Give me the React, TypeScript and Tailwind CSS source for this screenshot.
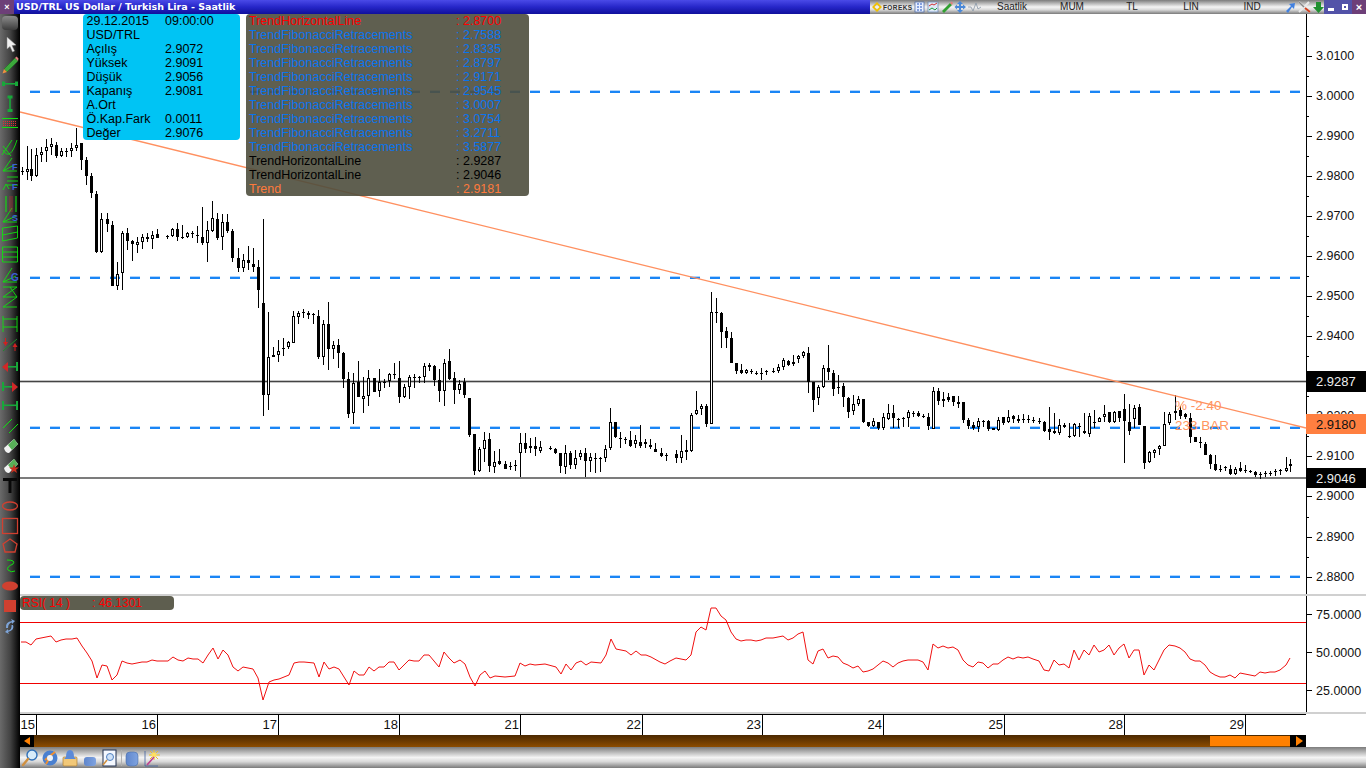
import React from "react";

const SANS = '"Liberation Sans", Arial, sans-serif';

// x, high, bodyTop, bodyBottom, low, hollow(1)/black(0)
const C: number[][] = [
[22,167,171,172,175,0],[27,146,169,172,180,1],[31,149,169,176,181,0],[36,148,155,176,177,1],[41,147,152,155,162,1],[46,139,147,151,162,1],[51,138,144,147,155,1],[56,142,145,156,158,0],[61,148,151,156,157,1],[66,148,151,152,157,0],[71,143,148,151,157,1],[76,128,145,148,151,1],[81,143,143,160,170,0],[86,157,160,176,185,0],[91,173,176,193,198,0],[96,191,194,252,253,0],[101,213,219,252,253,1],[107,213,219,224,232,0],[112,221,225,286,286,0],[117,262,274,286,290,1],[122,231,233,273,290,1],[127,228,233,241,250,0],[132,240,241,244,261,0],[137,237,242,245,253,1],[142,234,237,242,249,1],[147,233,237,239,242,0],[152,231,235,239,249,1],[157,229,234,238,238,0],[167,235,236,237,239,0],[172,228,229,236,237,1],[177,223,229,237,241,0],[182,225,237,238,239,0],[187,232,233,237,238,1],[192,231,233,234,238,0],[197,226,235,236,243,0],[202,207,237,243,245,0],[207,221,230,243,262,1],[212,201,218,231,232,1],[217,213,219,238,240,0],[222,214,222,237,250,1],[227,214,222,231,233,0],[232,229,231,258,262,0],[238,248,258,268,272,0],[243,254,260,268,272,1],[248,246,260,263,270,0],[253,248,264,267,272,0],[258,260,267,290,308,0],[263,219,303,395,416,0],[268,312,357,395,410,1],[273,347,355,357,357,0],[278,340,351,355,362,1],[283,338,348,349,356,0],[288,341,342,347,349,1],[293,311,316,343,343,1],[298,311,313,317,324,1],[303,309,312,313,318,0],[308,311,313,315,319,0],[313,313,314,315,324,0],[318,310,316,357,359,0],[323,320,324,357,365,1],[328,302,324,349,370,0],[333,341,345,349,359,1],[338,339,345,353,368,0],[343,352,353,379,388,0],[348,372,379,414,418,0],[353,373,383,413,424,1],[358,361,382,397,397,0],[363,377,396,399,413,1],[368,370,378,396,406,1],[374,378,378,392,392,0],[379,369,382,391,397,1],[384,379,382,383,388,0],[389,373,374,381,387,1],[394,363,374,375,379,0],[399,361,378,397,403,0],[404,384,387,397,398,1],[409,375,377,387,399,1],[414,374,377,378,388,0],[419,376,377,378,383,0],[424,363,366,377,383,1],[429,363,365,367,371,0],[434,365,366,380,386,0],[439,369,380,391,402,0],[444,359,363,391,406,1],[449,349,361,379,380,0],[454,372,378,390,404,0],[459,380,384,390,394,1],[464,378,382,395,398,0],[469,398,398,435,437,0],[474,434,434,471,475,0],[479,447,449,471,472,1],[484,432,440,449,462,1],[489,433,439,466,472,0],[494,451,462,467,473,1],[499,449,461,464,465,0],[505,461,464,469,469,0],[510,462,466,467,470,0],[515,460,465,466,471,0],[520,433,443,453,477,1],[525,433,443,449,453,0],[530,438,446,448,453,0],[535,437,446,449,456,0],[540,441,447,451,453,1],[550,446,448,449,450,0],[555,448,449,453,454,0],[560,453,453,466,473,0],[565,445,453,467,474,1],[570,451,453,465,469,0],[575,450,458,465,469,1],[580,450,453,457,460,1],[585,448,453,461,477,0],[590,453,457,461,472,1],[595,453,458,459,473,0],[600,457,458,459,472,0],[605,445,449,458,462,1],[610,408,422,448,450,1],[615,422,422,437,438,0],[620,432,438,439,448,0],[625,437,439,440,444,0],[630,431,440,446,447,0],[635,435,440,444,448,1],[640,425,442,446,448,0],[645,439,442,444,448,0],[650,439,445,447,449,0],[655,443,449,452,452,0],[661,448,453,456,457,0],[666,453,455,456,461,0],[676,450,454,458,463,0],[681,435,451,458,463,1],[686,440,450,452,460,0],[691,413,415,451,452,1],[696,391,410,414,415,1],[701,404,406,409,415,1],[706,404,406,424,427,0],[711,292,312,424,424,1],[716,298,312,313,323,0],[721,312,313,332,348,0],[726,327,331,338,348,0],[731,332,338,363,363,0],[736,363,363,371,374,0],[741,364,370,373,374,0],[746,369,370,373,374,1],[751,369,371,372,374,0],[756,371,373,374,375,0],[761,368,373,374,380,0],[766,370,371,372,375,0],[773,368,371,372,373,0],[778,364,367,371,373,1],[783,358,360,367,370,1],[788,360,361,365,366,0],[793,355,362,364,366,0],[798,355,356,359,363,1],[803,351,352,356,358,1],[808,347,353,382,393,0],[813,382,382,400,412,0],[818,385,387,398,405,1],[823,365,368,387,388,1],[828,345,368,372,380,0],[833,370,373,389,396,0],[838,375,387,388,394,0],[843,383,386,397,407,0],[848,397,398,412,418,0],[853,395,404,411,415,1],[858,396,399,404,406,1],[863,399,399,422,423,0],[868,422,422,426,427,0],[873,418,421,426,427,1],[878,422,422,428,430,0],[883,413,417,428,430,1],[888,404,413,419,420,1],[893,405,413,418,428,0],[898,418,419,420,428,0],[903,417,418,419,427,0],[908,410,412,418,427,1],[913,411,413,414,417,0],[918,411,413,416,417,0],[923,414,416,417,418,0],[928,413,417,426,430,0],[933,387,391,429,429,1],[938,388,391,401,405,0],[943,392,399,401,407,0],[948,393,397,400,402,0],[953,396,396,402,406,0],[958,396,402,404,408,1],[963,402,402,420,423,0],[968,418,420,426,429,0],[973,422,425,428,430,0],[978,418,421,427,432,1],[983,420,421,422,427,0],[988,420,421,429,431,0],[993,428,428,430,430,0],[998,417,420,430,431,1],[1003,417,417,423,425,0],[1008,410,417,422,423,1],[1013,415,416,419,423,0],[1018,415,419,421,423,0],[1023,414,419,420,423,0],[1028,415,419,420,423,0],[1033,417,420,421,423,0],[1039,418,421,422,424,0],[1044,421,422,431,432,0],[1049,407,429,432,440,0],[1054,413,431,433,434,0],[1059,419,425,433,435,1],[1064,423,425,427,428,0],[1069,423,436,437,438,0],[1074,423,424,436,437,1],[1079,423,426,427,437,0],[1084,413,431,433,434,0],[1089,413,416,434,437,1],[1094,410,422,423,428,0],[1099,417,418,422,422,1],[1104,405,414,417,422,1],[1109,412,412,422,423,0],[1114,411,412,422,423,1],[1119,411,411,418,422,0],[1124,394,409,421,463,0],[1129,404,422,431,435,0],[1134,405,408,419,428,1],[1139,404,407,425,425,0],[1144,426,426,463,469,0],[1149,451,452,462,463,1],[1154,449,450,453,458,1],[1159,445,446,449,455,1],[1164,412,424,446,446,1],[1169,412,414,423,425,1],[1175,395,411,413,420,1],[1180,406,410,416,419,0],[1185,413,414,417,419,0],[1190,413,418,437,443,0],[1195,437,437,442,442,0],[1200,437,442,443,448,0],[1205,442,444,455,455,0],[1210,454,455,464,469,0],[1215,455,464,470,471,0],[1220,465,469,470,472,0],[1225,466,467,468,471,0],[1230,465,469,474,475,0],[1235,467,469,474,475,1],[1240,462,468,471,472,0],[1245,465,470,471,473,0],[1250,470,471,472,473,0],[1255,471,472,475,477,0],[1260,472,474,475,479,0],[1265,471,473,474,477,0],[1270,471,473,474,476,0],[1275,469,471,472,476,0],[1280,469,470,471,475,0],[1286,457,468,471,472,1],[1290,459,464,466,472,1],
];

const RSI = "21,642 26,642 31,645 36,639 41,638 46,637 51,636 56,642 61,640 66,639 72,639 77,638 82,646 87,653 92,661 97,678 102,665 107,666 112,680 117,675 122,661 127,663 132,664 137,663 142,662 147,662 152,660 157,661 168,661 173,657 178,660 183,661 188,658 193,659 198,659 203,663 208,655 213,648 218,659 223,650 228,655 233,667 238,671 243,667 248,668 253,669 258,678 263,700 269,682 274,680 279,679 289,675 294,663 299,662 304,662 314,663 319,677 324,662 329,669 334,667 339,669 349,685 354,671 359,675 364,675 369,667 374,671 379,667 384,667 389,662 394,662 399,670 409,660 414,661 419,661 424,655 429,655 434,661 439,667 444,652 449,658 454,663 460,660 465,664 470,677 475,686 480,675 485,671 490,678 495,676 505,677 515,676 520,663 525,666 530,664 535,665 545,664 556,667 561,674 566,664 571,670 576,663 581,661 586,665 591,662 601,663 606,655 611,639 616,649 626,651 631,655 636,651 641,655 646,655 651,657 660,662 665,664 670,661 676,658 681,659 686,660 691,655 696,632 701,627 706,630 711,608 716,608 721,616 726,620 731,632 736,639 741,641 746,640 751,640 756,641 761,640 766,638 773,638 778,637 783,636 788,640 793,638 798,634 803,632 808,660 813,664 818,651 823,649 828,658 833,656 838,657 843,663 848,665 853,668 858,666 863,672 868,671 873,669 878,665 883,661 888,663 893,667 898,663 903,661 908,660 913,660 918,660 923,662 928,670 933,644 938,648 943,646 948,648 953,647 958,650 963,660 968,665 973,667 978,662 983,663 988,668 993,664 998,664 1003,660 1008,657 1013,659 1018,657 1023,658 1028,657 1033,659 1039,661 1044,670 1049,671 1054,660 1059,665 1064,664 1069,668 1074,650 1079,660 1084,650 1089,655 1094,645 1099,652 1104,650 1109,645 1114,655 1119,648 1124,644 1129,658 1134,650 1139,650 1144,675 1149,665 1154,670 1159,660 1164,650 1169,645 1175,646 1180,648 1185,652 1190,659 1195,661 1200,661 1205,665 1210,672 1215,675 1220,677 1225,677 1230,675 1235,678 1240,673 1245,674 1250,675 1255,676 1260,672 1265,673 1270,672 1275,672 1280,670 1286,665 1290,658";

const PRICES: [string, number][] = [["3.0100",56],["3.0000",96],["2.9900",136],["2.9800",176],["2.9700",216],["2.9600",256],["2.9500",296],["2.9400",336],["2.9200",416],["2.9100",456],["2.9000",496],["2.8900",537],["2.8800",577]];
const MINOR = [36,76,116,156,196,236,276,316,356,376,396,436,476,517,557];

const INFO = [["29.12.2015","09:00:00"],["USD/TRL",""],["Açılış","2.9072"],["Yüksek","2.9091"],["Düşük","2.9056"],["Kapanış","2.9081"],["A.Ort",""],["Ö.Kap.Fark","0.0011"],["Değer","2.9076"]];

const R = "text-[#ff0000]", B = "text-[#0a74ee]", K = "text-black", O = "text-[#ff7a3c]";
const TRENDS: [string, string, string][] = [["TrendHorizontalLine","2.8700",R],["TrendFibonacciRetracements","2.7588",B],["TrendFibonacciRetracements","2.8335",B],["TrendFibonacciRetracements","2.8797",B],["TrendFibonacciRetracements","2.9171",B],["TrendFibonacciRetracements","2.9545",B],["TrendFibonacciRetracements","3.0007",B],["TrendFibonacciRetracements","3.0754",B],["TrendFibonacciRetracements","3.2711",B],["TrendFibonacciRetracements","3.5877",B],["TrendHorizontalLine","2.9287",K],["TrendHorizontalLine","2.9046",K],["Trend","2.9181",O]];

const CHROME = "bg-[linear-gradient(to_bottom,#7c7c7c_0%,#a8a8a8_18%,#f4f4f4_50%,#d8d8d8_70%,#7a7a7a_100%)]";

function Candle({ d }: { d: number[] }) {
  const [x, h, t, b, l, hollow] = d;
  const flat = b - t <= 1;
  return (
    <g>
      <rect x={x} y={h} width={1} height={l - h} fill="#000" />
      <rect x={x - 1} y={t} width={3} height={Math.max(b - t, 1)} fill="#000" />
      {hollow === 1 && !flat && <rect x={x} y={t + 1} width={1} height={b - t - 2} fill="#fff" />}
    </g>
  );
}

function MainChart() {
  return (
    <svg viewBox="20 14 1346 580" className="block w-[1346px] h-[580px]">
      <g shapeRendering="crispEdges">
        {[92, 278, 428, 577].map((y) => (
          <g key={y}>
            <line x1={30} x2={1306} y1={y - 0.5} y2={y - 0.5} stroke="#1a85f5" strokeOpacity={0.35} strokeWidth={3} strokeDasharray="10 10" />
            <line x1={30} x2={1306} y1={y} y2={y} stroke="#1a85f5" strokeWidth={2} strokeDasharray="10 10" />
          </g>
        ))}
        <rect x={20} y={380} width={1286} height={3} fill="#c4c4c4" />
        <rect x={20} y={381} width={1286} height={1} fill="#444" />
        <rect x={20} y={477} width={1286} height={2} fill="#7c7c7c" />
        {C.map((d, i) => <Candle key={i} d={d} />)}
      </g>
      <line x1={20} y1={112} x2={1306} y2={428} stroke="#ff9060" strokeWidth={1.3} />
      <text x={1175} y={410} fontFamily={SANS} fontSize={13.5} fill="#ff9560">% -2.40</text>
      <text x={1175} y={430} fontFamily={SANS} fontSize={13.5} fill="#ff9560">233 BAR</text>
      <g shapeRendering="crispEdges">
        <rect x={1306} y={14} width={1} height={580} fill="#000" />
        {PRICES.map(([, y]) => <rect key={y} x={1306} y={y} width={6} height={1} fill="#000" />)}
        {MINOR.map((y) => <rect key={y} x={1306} y={y} width={3} height={1} fill="#000" />)}
      </g>
      {PRICES.map(([p, y]) => (
        <text key={p} x={1316} y={y + 4} fontFamily={SANS} fontSize={12.5} fill="#111">{p}</text>
      ))}
      <rect x={1306} y={371} width={60} height={21} fill="#000" />
      <text x={1316} y={386} fontFamily={SANS} fontSize={13} fill="#eee">2.9287</text>
      <rect x={1306} y={414} width={60} height={20} fill="#ff7f40" />
      <text x={1316} y={429} fontFamily={SANS} fontSize={13} fill="#111">2.9180</text>
      <rect x={1306} y={468} width={60} height={20} fill="#000" />
      <text x={1316} y={483} fontFamily={SANS} fontSize={13} fill="#eee">2.9046</text>
    </svg>
  );
}

function RsiChart() {
  return (
    <svg viewBox="20 596 1346 116" className="block w-[1346px] h-[116px]">
      <g shapeRendering="crispEdges">
        <rect x={20} y={622} width={1286} height={1} fill="#f00000" />
        <rect x={20} y={683} width={1286} height={1} fill="#f00000" />
        <rect x={1306} y={596} width={1} height={116} fill="#000" />
        {[614, 652, 690].map((y) => <rect key={y} x={1306} y={y} width={6} height={1} fill="#000" />)}
      </g>
      <polyline points={RSI} fill="none" stroke="#f01010" strokeWidth={1} />
      {[["75.0000", 614], ["50.0000", 652], ["25.0000", 690]].map(([t, y]) => (
        <text key={t} x={1316} y={Number(y) + 5} fontFamily={SANS} fontSize={12.5} fill="#111">{t}</text>
      ))}
    </svg>
  );
}

function Side() {
  const g = "#10e010";
  const r = "#d04030";
  return (
    <svg viewBox="0 14 20 754" className="block w-5 h-[754px]">
      <defs>
        <linearGradient id="btn" x1="0" y1="0" x2="0" y2="1">
          <stop offset="0" stopColor="#8c8c8c" /><stop offset="1" stopColor="#3c3c3c" />
        </linearGradient>
      </defs>
      <rect x={2} y={16} width={16} height={14} rx={4} fill="url(#btn)" />
      <path d="M7 37 L7 49 L10 46.5 L12.5 52 L14.5 51 L12 45.5 L16 45 Z" fill="#f0f0f0" stroke="#888" strokeWidth={0.5} />
      <path d="M4 69 L15 58 L18 61 L7 72 Z" fill="#3ca83c" stroke="#1a6a1a" strokeWidth={0.5} />
      <path d="M15 58 L16.5 56.5 L18.5 58.5 L18 61 Z" fill="#e08080" />
      <path d="M4 69 L7 72 L2.5 73.5 Z" fill="#f09040" />
      <g fill="#18a83a">
        <rect x={3} y={83} width={14} height={1.6} /><rect x={2} y={81.5} width={3} height={4.5} /><rect x={15} y={81.5} width={3} height={4.5} />
        <rect x={9.2} y={96} width={1.6} height={15} /><rect x={7.5} y={95.5} width={5} height={3} /><rect x={7.5} y={109} width={5} height={3} />
      </g>
      <g shapeRendering="crispEdges">
        <rect x={2} y={118} width={16} height={1} fill={g} /><rect x={2} y={127} width={16} height={1} fill={g} />
        <path d="M3 121h14M3 123h14M3 125h14" stroke="#e03030" strokeWidth={1} strokeDasharray="1 1" />
      </g>
      <g fill="none" stroke={g} strokeWidth={0.9}>
        <path d="M2 155 L12 140 M3 146 L11 156 M3 150 Q10 162 17 140" />
        <path d="M3 171 L12 158 M3 171 L17 171 M3 171 L16 164" />
        <path d="M7 177h11M7 181h11M7 185h11M3 190 L6 184 L9 189" />
        <path d="M6 196v16M16 196v16" strokeWidth={1.1} />
        <path d="M3 222 L12 208 M3 222 L17 222 M3 222 L16 216" />
        <path d="M2.5 241 V228 L17.5 226 V238 Z M2.5 235 L17.5 232" />
        <path d="M2.5 247 V262 H17.5 V247 Z M2.5 252h15M2.5 257h15" />
        <path d="M3 282 L12 268 M3 282 L17 282 M3 282 L16 276" />
        <path d="M3 297 H17 L3 307 H17 M3 287 H17 L3 297 M10 287 L17 297" />
        <path d="M3 316 V332 M17 316 V332 M3 319h14M3 327h14" />
      </g>
      <path d="M10 196.5v15M12 196.5v15" stroke="#e03030" strokeWidth={1} strokeDasharray="1 1" />
      <text x={12} y={170} fontFamily={SANS} fontSize={9} fontWeight={700} fill="#3a60d8">F</text>
      <text x={12} y={190} fontFamily={SANS} fontSize={9} fontWeight={700} fill="#3a60d8">F</text>
      <text x={12} y={221} fontFamily={SANS} fontSize={9} fontWeight={700} fill="#3a60d8">S</text>
      <text x={11} y={281} fontFamily={SANS} fontSize={10} fontWeight={700} fill="#3a60d8">G</text>
      <path d="M3 351 L17 339" stroke="#1c8a2c" strokeWidth={1} />
      <path d="M5 338 L5 342 L3 342 L5.5 346 L8 342 L6 342 L6 338 Z M14.5 351 L14.5 347 L12.5 347 L15 343 L17.5 347 L15.5 347 L15.5 351 Z" fill="#d02020" />
      <rect x={4} y={366} width={14} height={1.6} fill="#18a83a" /><rect x={16} y={362} width={2} height={9} fill="#18a83a" />
      <path d="M2 367 L8 362 L8 372 Z" fill="#d02828" />
      <rect x={2} y={386} width={14} height={1.6} fill="#18a83a" /><rect x={2} y={382} width={2} height={9} fill="#18a83a" />
      <path d="M18 387 L12 382 L12 392 Z" fill="#d02828" />
      <rect x={3} y={404.5} width={14} height={1.6} fill="#18a83a" /><rect x={2} y={401} width={2} height={9} fill="#18a83a" /><rect x={16} y={401} width={2} height={9} fill="#18a83a" />
      <path d="M3 428 L12 419 M9 433 L18 424" stroke={g} strokeWidth={1} fill="none" />
      <path d="M4 448 L14 439 L18 444 L9 453 Q5 453 4 448 Z" fill="#f2f2f2" /><path d="M8 445 L14 439 L18 444 L12 450 Z" fill="#58b058" />
      <path d="M4 468 L14 459 L18 464 L9 473 Q5 473 4 468 Z" fill="#f2f2f2" /><path d="M8 465 L14 459 L18 464 L12 470 Z" fill="#58b058" />
      <path d="M14 464 L15.2 467.5 L19 467.5 L16 469.7 L17 473 L14 471 L11 473 L12 469.7 L9 467.5 L12.8 467.5 Z" fill="#c83020" />
      <path d="M3 478 H17 V481 H11.5 V493 H8.5 V481 H3 Z" fill="#080808" />
      <ellipse cx={10} cy={506} rx={7.5} ry={4} fill="none" stroke={r} strokeWidth={1.3} />
      <rect x={2.5} y={518.5} width={15} height={15} fill="none" stroke={r} strokeWidth={1.3} />
      <path d="M10 539 L17 544 L15 552 L5 552 L3 544 Z" fill="none" stroke={r} strokeWidth={1.3} />
      <path d="M7 560 Q16 560 13 564 Q6 567 8 570 Q11 573 15 571" fill="none" stroke={g} strokeWidth={1} />
      <ellipse cx={10} cy={586} rx={8} ry={4.5} fill={r} />
      <rect x={4} y={600} width={12} height={12} fill={r} />
      <path d="M6 628 Q5 622 12 621 L11 619 L15 621 L12 624 L12 622.5 Q8 623 8 628 Z M13 625 Q15 630 8 632 L9 634 L5 632 L8 629 L8 630.5 Q12 630 11.5 625 Z" fill="#7da4d8" />
    </svg>
  );
}

function TopIcons() {
  return (
    <svg width="112" height="14" viewBox="870 0 112 14" className="block shrink-0">
      <path d="M877 2 L882 7 L877 12 L872 7 Z M877 4.5 L874.5 7 L877 9.5 L879.5 7 Z" fill="#f0c000" fillRule="evenodd" />
      <text x={883} y={9.5} fontFamily={SANS} fontSize={6.5} fontWeight={700} letterSpacing={0.4} fill="#333">FOREKS</text>
      <rect x={915} y={2} width={9} height={10} fill="#e8f0ff" stroke="#4060a0" strokeWidth={0.7} />
      <path d="M917 4h2M920 4h2M917 7h2M920 7h2M917 10h2M920 10h2" stroke="#2050c0" strokeWidth={1.2} />
      <rect x={928} y={2} width={10} height={10} fill="#dfe8f8" stroke="#6080b0" strokeWidth={0.7} />
      <path d="M929 6 L932 4 L934 5 L937 3" stroke="#d03030" fill="none" /><path d="M929 10 L932 8 L935 10 L937 8" stroke="#20a040" fill="none" />
      <path d="M942 11 L950 3 L952 5 L944 13 Z" fill="#30a030" /><path d="M950 3 L951.5 1.5 L953 3 L952 5 Z" fill="#e08080" />
      <path d="M960 1 L963 4 L961 4 L961 6 L963 6 L963 4.5 L966 7 L963 9.5 L963 8 L961 8 L961 10 L963 10 L960 13 L957 10 L959 10 L959 8 L957 8 L957 9.5 L954.5 7 L957 4.5 L957 6 L959 6 L959 4 L957 4 Z" fill="#4a88d8" />
      <path d="M968 7 H971 L973 11 L976 3 L978 9 L981 7" fill="none" stroke="#8a98a8" strokeWidth={0.8} />
    </svg>
  );
}

function TopRight() {
  return (
    <svg width="40" height="14" viewBox="1284 0 40 14" className="block shrink-0">
      <path d="M1286 11 L1291 6 L1289 4 L1295 3 L1294 9 L1292 7 L1288 13 Z" fill="#4080e0" />
      <path d="M1299 2 L1310 12 M1309 2 L1299 12" stroke="#e8e8e8" strokeWidth={2} />
      <path d="M1299 2 L1304 7" stroke="#888" strokeWidth={1.5} /><path d="M1305 8 L1310 12" stroke="#d04020" strokeWidth={2} />
      <path d="M1316 2 H1321 V7 H1324 L1318.5 13 L1313 7 H1316 Z" fill="#209030" />
    </svg>
  );
}

function BottomIcons() {
  return (
    <svg width="150" height="20" viewBox="20 748 150 20" className="block">
      <defs>
        <linearGradient id="cyl" x1="0" y1="0" x2="1" y2="0"><stop offset="0" stopColor="#5f86cc" /><stop offset="1" stopColor="#7fa3e0" /></linearGradient>
      </defs>
      <circle cx={32} cy={755} r={5} fill="#d8ecfa" stroke="#3070b8" strokeWidth={1.4} />
      <path d="M28 759 L23 765" stroke="#d09040" strokeWidth={2.4} strokeLinecap="round" />
      <circle cx={50} cy={758} r={7.5} fill="#4a80d0" /><path d="M45 760 L55 752 M46 764 L52 754" stroke="#f09030" strokeWidth={2} /><circle cx={50} cy={758} r={3} fill="#eef4fb" />
      <rect x={63} y={757} width={14} height={9} rx={1} fill="#f2c878" stroke="#b08030" strokeWidth={0.7} />
      <path d="M66 757 Q66 750 70 750 Q74 750 74 757 L76 759 H64 Z" fill="#5c8ad8" />
      <rect x={84} y={757} width={12} height={9} rx={3} fill="url(#cyl)" />
      <rect x={103} y={750} width={13} height={16} fill="#f4f8ff" stroke="#203050" strokeWidth={1} />
      <circle cx={110} cy={757} r={3.5} fill="#cfe2f8" stroke="#5080c0" strokeWidth={1} /><path d="M107 760 L103 765" stroke="#d09040" strokeWidth={1.6} />
      <rect x={121} y={750} width={1} height={16} fill="#b0b0b0" />
      <rect x={126} y={752} width={12} height={14} rx={4} fill="url(#cyl)" stroke="#4a6ea8" strokeWidth={0.6} />
      <g stroke="#f0c020" strokeWidth={1}><path d="M154 750 V760 M149 755 H160 M150 751 L158 759 M158 751 L150 759" /></g>
      <circle cx={154} cy={755} r={2.5} fill="#ffe060" />
      <path d="M145 751 V766 H158" fill="none" stroke="#4060a0" strokeWidth={0.8} />
      <path d="M147 765 L154 757" stroke="#c04090" strokeWidth={1.6} />
    </svg>
  );
}

const TABS: [string, string][] = [["Saatlik", "w-[60px]"], ["MUM", "w-[60px]"], ["TL", "w-[60px]"], ["LIN", "w-[58px]"], ["IND", "w-[64px]"]];
const DAYS: [string, string][] = [["15", "w-[17px]"], ["16", "w-[121px]"], ["17", "w-[121px]"], ["18", "w-[121px]"], ["21", "w-[121px]"], ["22", "w-[122px]"], ["23", "w-[120px]"], ["24", "w-[121px]"], ["25", "w-[121px]"], ["28", "w-[120px]"], ["29", "w-[121px]"]];

export default function App() {
  return (
    <div className="w-[1366px] h-[768px] flex flex-col overflow-hidden bg-white" style={{ fontFamily: SANS }}>
      <div className="flex h-[14px] shrink-0">
        <div className="w-[870px] shrink-0 flex bg-[linear-gradient(to_bottom,#4a4ae8_0%,#2626c8_50%,#10109c_100%)]">
          <div className="w-[14px] flex items-center justify-center bg-[#6d3f78] text-white text-[9px] font-bold leading-none">×</div>
          <div className="pl-[2px] text-white text-[9.5px] font-bold leading-[14px] whitespace-nowrap" style={{ fontFamily: '"DejaVu Sans", sans-serif' }}>USD/TRL US Dollar / Turkish Lira - Saatlik</div>
        </div>
        <div className={`w-[496px] shrink-0 flex items-center ${CHROME}`}>
          <TopIcons />
          <div className="flex shrink-0 text-[10px] leading-[14px] text-[#222]">
            {TABS.map(([t, w]) => <div key={t} className={`${w} text-center`}>{t}</div>)}
          </div>
          <TopRight />
          <div className="w-[14px] h-[14px] shrink-0 flex items-center justify-center bg-[#5252a8]"><div className="w-[6px] h-[3px] mt-[4px] bg-white" /></div>
          <div className="w-[14px] h-[14px] shrink-0 flex items-center justify-center bg-[#5252a8]"><div className="w-[6px] h-[6px] border-2 border-white" /></div>
          <div className="w-[14px] h-[14px] shrink-0 flex items-center justify-center bg-[#6d3f78] text-white text-[11px] font-bold leading-none">×</div>
        </div>
      </div>

      <div className="flex flex-1 min-h-0">
        <div className="w-5 shrink-0 bg-[linear-gradient(to_right,#6a6a6a_0%,#444_50%,#000_100%)]">
          <Side />
        </div>
        <div className="flex-1 flex flex-col min-w-0">
          <div className="relative h-[580px] shrink-0">
            <MainChart />
            <div className="absolute left-[63px] top-0 w-[157px] h-[126px] rounded-[4px] bg-[#00c4f4] pl-[3.5px] text-[12.5px] leading-[14px] text-black">
              {INFO.map(([a, b], i) => (
                <div key={i} className="flex h-[14px]">
                  <div className="w-[78.5px] whitespace-nowrap">{a}</div><div className="whitespace-nowrap">{b}</div>
                </div>
              ))}
            </div>
            <div className="absolute left-[226px] top-0 w-[283px] h-[182px] rounded-[4px] bg-[#4e4e3d]/90 pl-[3px] text-[12.5px] leading-[14px]">
              {TRENDS.map(([a, b, c], i) => (
                <div key={i} className={`flex h-[14px] whitespace-nowrap ${c}`}>
                  <div className="w-[207px]">{a}</div><div>: {b}</div>
                </div>
              ))}
            </div>
          </div>
          <div className="h-[2px] shrink-0 bg-[#d0d0d0]" />
          <div className="relative h-[116px] shrink-0">
            <RsiChart />
            <div className="absolute left-0 top-0 w-[154px] h-[14px] rounded-[4px] bg-[#5e5e4f] flex text-[12px] leading-[14px] text-[#ff0000] pl-[2px] whitespace-nowrap">
              <div className="w-[70px]">RSI( 14 )</div><div>: 46.1301</div>
            </div>
          </div>
          <div className="h-[2px] shrink-0 bg-[#d0d0d0]" />
          <div className="flex h-[21px] shrink-0 w-[1286px] border-t border-black text-[13px] leading-[20px] text-[#111]">
            {DAYS.map(([d, w]) => (
              <div key={d} className={`${w} shrink-0 border-r border-black text-right pr-[1px]`}>{d}</div>
            ))}
          </div>
          <div className="flex h-[12px] shrink-0 w-[1286px] bg-black items-stretch">
            <div className="w-[14px] flex items-center justify-center"><div className="w-0 h-0 border-y-[4px] border-y-transparent border-r-[6px] border-r-[#ff8000]" /></div>
            <div className="flex-1 flex justify-end bg-[linear-gradient(to_bottom,#4a2800,#8c4c00)]">
              <div className="w-[80px] bg-[#ff8000] mt-[1px] mb-[1px]" />
            </div>
            <div className="w-[16px] flex items-center justify-end pr-[3px]"><div className="w-0 h-0 border-y-[5px] border-y-transparent border-l-[7px] border-l-[#ff8000]" /></div>
          </div>
          <div className={`flex-1 flex items-center ${CHROME}`}>
            <BottomIcons />
          </div>
        </div>
      </div>
    </div>
  );
}
